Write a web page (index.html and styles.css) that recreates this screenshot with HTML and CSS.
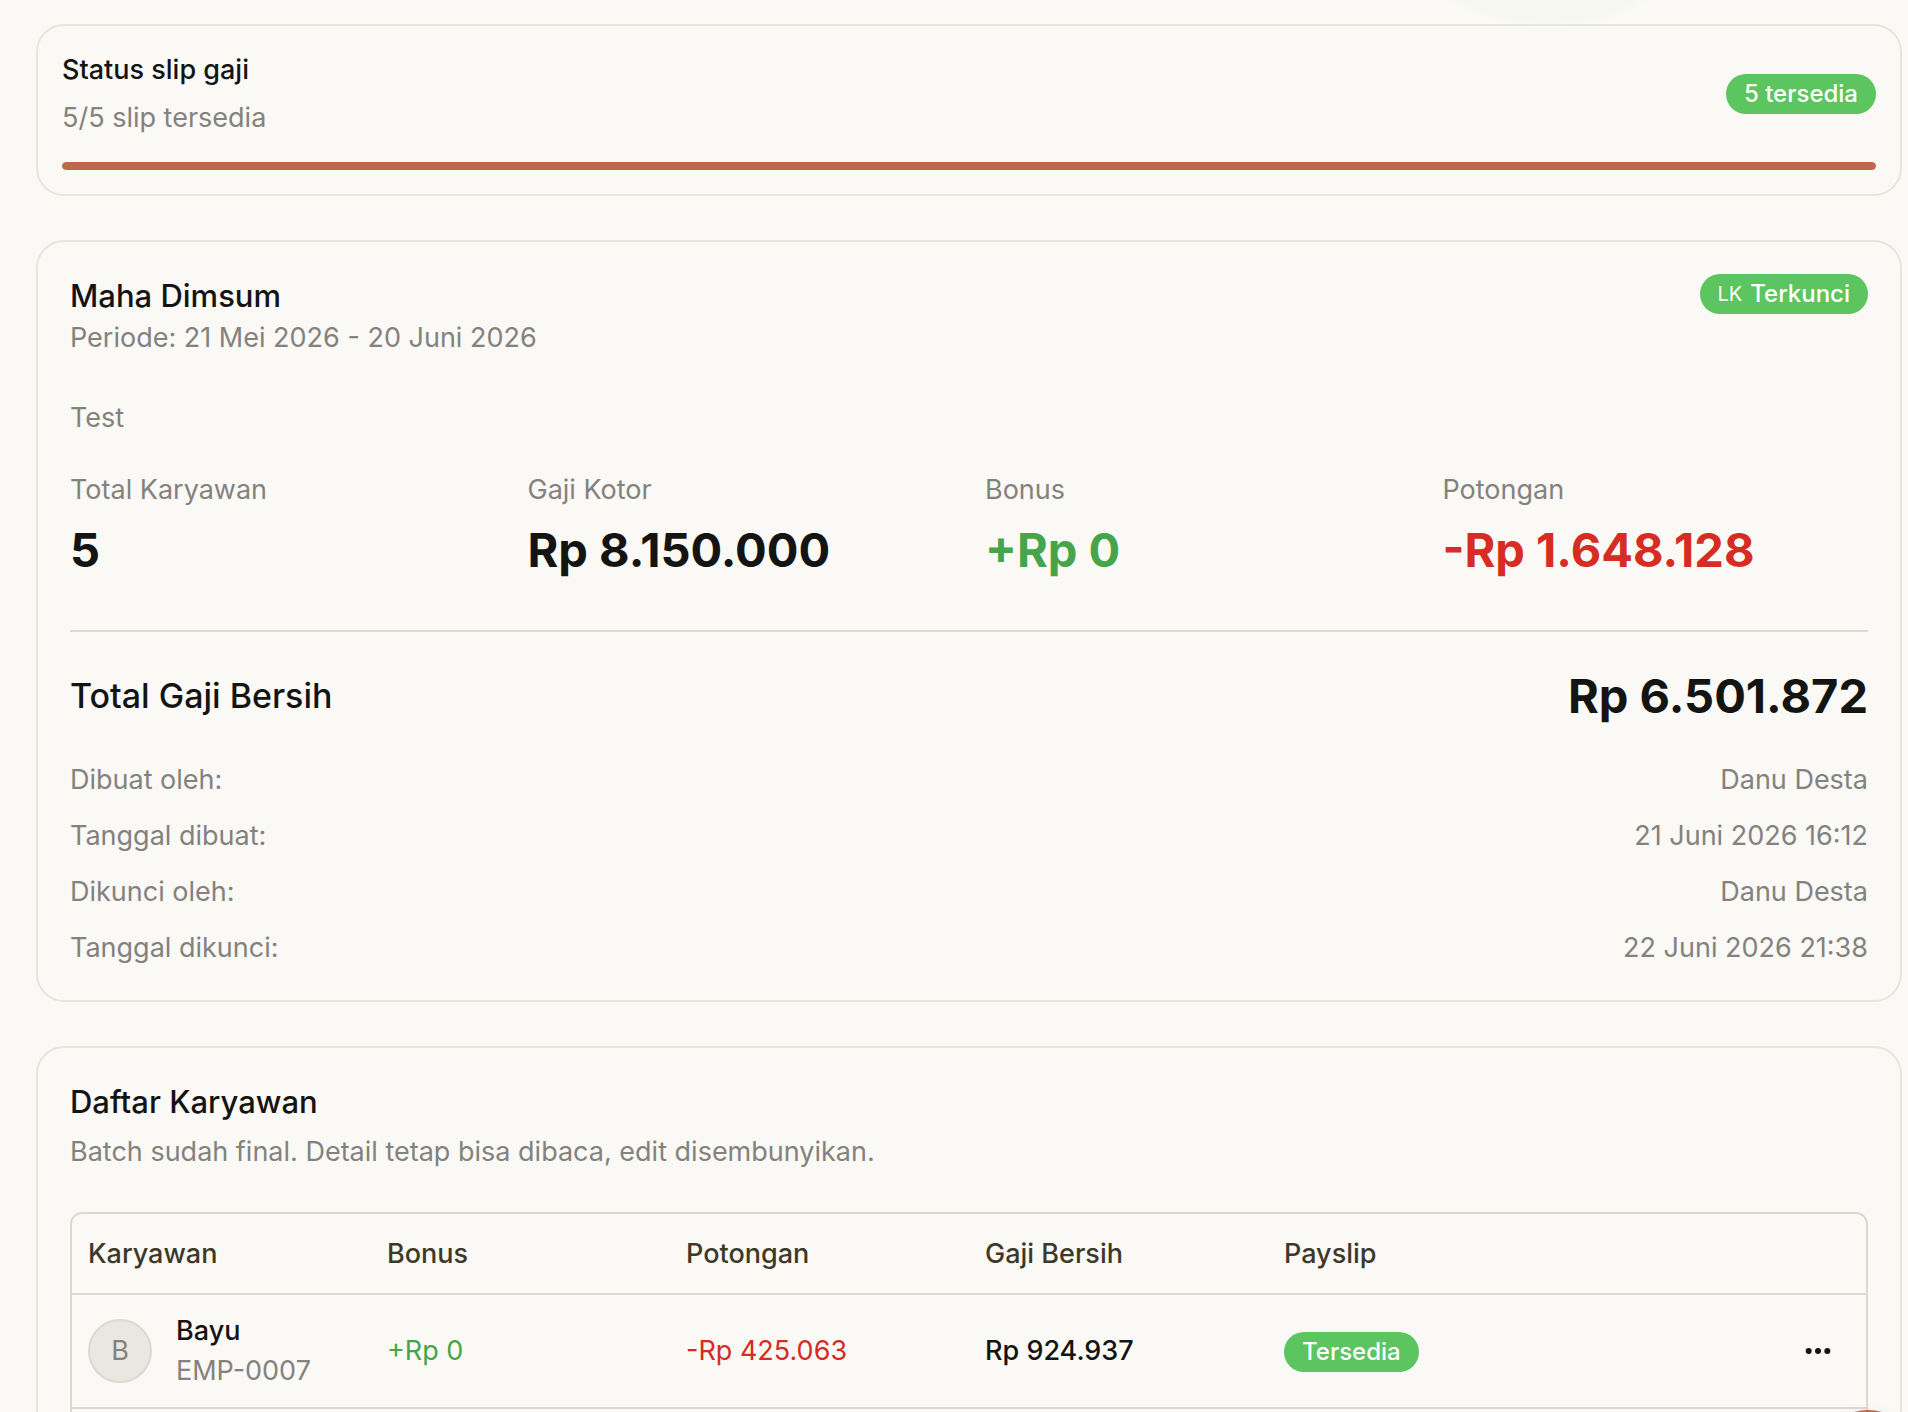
FILE: index.html
```html
<!DOCTYPE html>
<html lang="id">
<head>
<meta charset="utf-8">
<meta name="viewport" content="width=device-width, initial-scale=1">
<title>Slip gaji – Maha Dimsum</title>
<link rel="stylesheet" href="styles.css">
</head>
<body>
<div class="page">
  <div class="glow"></div>
  <main class="stack">
    <section class="card card-compact">
      <div class="row">
        <div class="status-text">
          <h2 class="label-strong">Status slip gaji</h2>
          <p class="muted">5/5 slip tersedia</p>
        </div>
        <span class="badge">5 tersedia</span>
      </div>
      <div class="progress" role="progressbar" aria-label="Status slip gaji" aria-valuemin="0" aria-valuemax="5" aria-valuenow="5">
        <div class="progress-fill" style="width: 100%"></div>
      </div>
    </section>

    <section class="card">
      <div class="row row-top">
        <div>
          <h2 class="title">Maha Dimsum</h2>
          <p class="muted">Periode: 21 Mei 2026 - 20 Juni 2026</p>
        </div>
        <span class="badge"><span class="badge-mark">LK</span>Terkunci</span>
      </div>
      <p class="muted note">Test</p>
      <dl class="stats">
        <div class="stat"><dt class="muted">Total Karyawan</dt><dd class="amount">5</dd></div>
        <div class="stat"><dt class="muted">Gaji Kotor</dt><dd class="amount">Rp 8.150.000</dd></div>
        <div class="stat"><dt class="muted">Bonus</dt><dd class="amount plus">+Rp 0</dd></div>
        <div class="stat"><dt class="muted">Potongan</dt><dd class="amount minus">-Rp 1.648.128</dd></div>
      </dl>
      <div class="row total">
        <h3 class="total-label">Total Gaji Bersih</h3>
        <strong class="amount">Rp 6.501.872</strong>
      </div>
      <dl class="meta">
        <div class="row muted"><dt>Dibuat oleh:</dt><dd>Danu Desta</dd></div>
        <div class="row muted"><dt>Tanggal dibuat:</dt><dd>21 Juni 2026 16:12</dd></div>
        <div class="row muted"><dt>Dikunci oleh:</dt><dd>Danu Desta</dd></div>
        <div class="row muted"><dt>Tanggal dikunci:</dt><dd>22 Juni 2026 21:38</dd></div>
      </dl>
    </section>

    <section class="card">
      <h2 class="title">Daftar Karyawan</h2>
      <p class="muted subtitle">Batch sudah final. Detail tetap bisa dibaca, edit disembunyikan.</p>
      <div class="table-frame">
        <table class="table">
          <thead>
            <tr><th scope="col">Karyawan</th><th scope="col">Bonus</th><th scope="col">Potongan</th><th scope="col">Gaji Bersih</th><th scope="col">Payslip</th><td></td></tr>
          </thead>
          <tbody>
            <tr>
              <td>
                <div class="person">
                  <span class="avatar">B</span>
                  <div>
                    <div class="label-strong">Bayu</div>
                    <div class="muted">EMP-0007</div>
                  </div>
                </div>
              </td>
              <td class="plus">+Rp 0</td>
              <td class="minus">-Rp 425.063</td>
              <td class="label-strong">Rp 924.937</td>
              <td><span class="badge">Tersedia</span></td>
              <td class="actions">
                <button class="icon-button" type="button" aria-label="Menu Bayu">
                  <svg width="32" height="32" viewBox="0 0 32 32" fill="currentColor" aria-hidden="true"><circle cx="6.67" cy="16" r="3"/><circle cx="16" cy="16" r="3"/><circle cx="25.33" cy="16" r="3"/></svg>
                </button>
              </td>
            </tr>
            <tr class="next-row"><td></td><td></td><td></td><td></td><td></td><td></td></tr>
          </tbody>
        </table>
      </div>
    </section>
  </main>
  <button class="fab" type="button" aria-label="Bantuan"></button>
</div>
</body>
</html>
```
FILE: styles.css
```css
:root {
  --bg: #faf9f5;
  --line: #dad9d4;
  --line-soft: #e6e5e0;
  --text: #141413;
  --muted: #83827d;
  --heading: #3d3929;
  --green: #5cc560;
  --green-text: #46a54a;
  --red: #d62c24;
  --accent: #bd6847;
}

* { box-sizing: border-box; }

body {
  margin: 0;
  background: var(--bg);
  color: var(--text);
  font: 400 27px/40px Inter, "Liberation Sans", sans-serif;
}

h2, h3, p, dl, dd { margin: 0; }

.page {
  position: relative;
  height: 100vh;
  overflow: hidden;
}

.glow {
  position: absolute;
  top: -368px;
  right: 158px;
  width: 400px;
  height: 400px;
  background: radial-gradient(closest-side, rgba(70, 165, 74, 0.2), transparent);
}

.stack {
  position: relative;
  display: flex;
  flex-direction: column;
  gap: 44px;
  padding: 24px 6px 44px 36px;
}

.card {
  border: 2px solid var(--line-soft);
  border-radius: 28px;
  padding: 32px;
}

.card-compact { padding: 24px; }

.row {
  display: flex;
  align-items: center;
  justify-content: space-between;
}

.row-top { align-items: flex-start; }

.status-text {
  display: grid;
  gap: 8px;
}

.muted { color: var(--muted); }

.label-strong {
  font-size: 27px;
  font-weight: 500;
}

.title {
  font-size: 31px;
  font-weight: 500;
  line-height: 44px;
}

.badge {
  display: inline-flex;
  align-items: center;
  gap: 8px;
  height: 40px;
  padding: 0 18px;
  border-radius: 20px;
  background: var(--green);
  color: #fff;
  font-size: 24px;
  font-weight: 500;
}

.badge-mark {
  font-size: 20px;
  font-weight: 400;
}

.progress {
  height: 8px;
  margin-top: 24px;
  border-radius: 4px;
  overflow: hidden;
}

.progress-fill {
  height: 100%;
  border-radius: 4px;
  background: var(--accent);
}

.note { margin-top: 40px; }

.stats {
  display: grid;
  grid-template-columns: repeat(4, 1fr);
  gap: 32px;
  margin-top: 32px;
  padding-bottom: 48px;
  border-bottom: 2px solid var(--line);
}

.stat {
  display: grid;
  gap: 8px;
}

.amount {
  font-size: 47px;
  font-weight: 700;
  line-height: 64px;
}

.plus { color: var(--green-text); }
.minus { color: var(--red); }

.total { margin-top: 32px; }

.total-label {
  font-size: 34px;
  font-weight: 500;
}

.meta {
  display: grid;
  gap: 16px;
  margin-top: 32px;
}

.subtitle { margin-top: 8px; }

.table-frame {
  margin-top: 40px;
  border: 2px solid var(--line);
  border-radius: 12px;
  overflow: hidden;
}

.table {
  width: 100%;
  table-layout: fixed;
  border-collapse: separate;
  border-spacing: 0;
}

.table th,
.table td {
  padding: 16px;
  border-bottom: 2px solid var(--line);
  text-align: left;
}

.table th {
  height: 81px;
  color: var(--heading);
  font-weight: 500;
}

.table .next-row td {
  height: 114px;
  border-bottom: 0;
}

.table .badge { vertical-align: middle; }

.person {
  display: flex;
  align-items: center;
  gap: 24px;
}

.avatar {
  display: flex;
  align-items: center;
  justify-content: center;
  width: 64px;
  height: 64px;
  border: 2px solid var(--line);
  border-radius: 50%;
  background: #e9e7df;
  color: var(--muted);
}

.icon-button {
  display: flex;
  align-items: center;
  justify-content: center;
  width: 64px;
  height: 64px;
  margin-left: auto;
  padding: 0;
  border: 0;
  background: none;
  color: var(--text);
}

.fab {
  position: absolute;
  right: -8px;
  bottom: -94px;
  width: 96px;
  height: 96px;
  padding: 0;
  border: 0;
  border-radius: 50%;
  background: var(--accent);
  box-shadow: 0 8px 16px rgba(0, 0, 0, 0.2);
}
```
